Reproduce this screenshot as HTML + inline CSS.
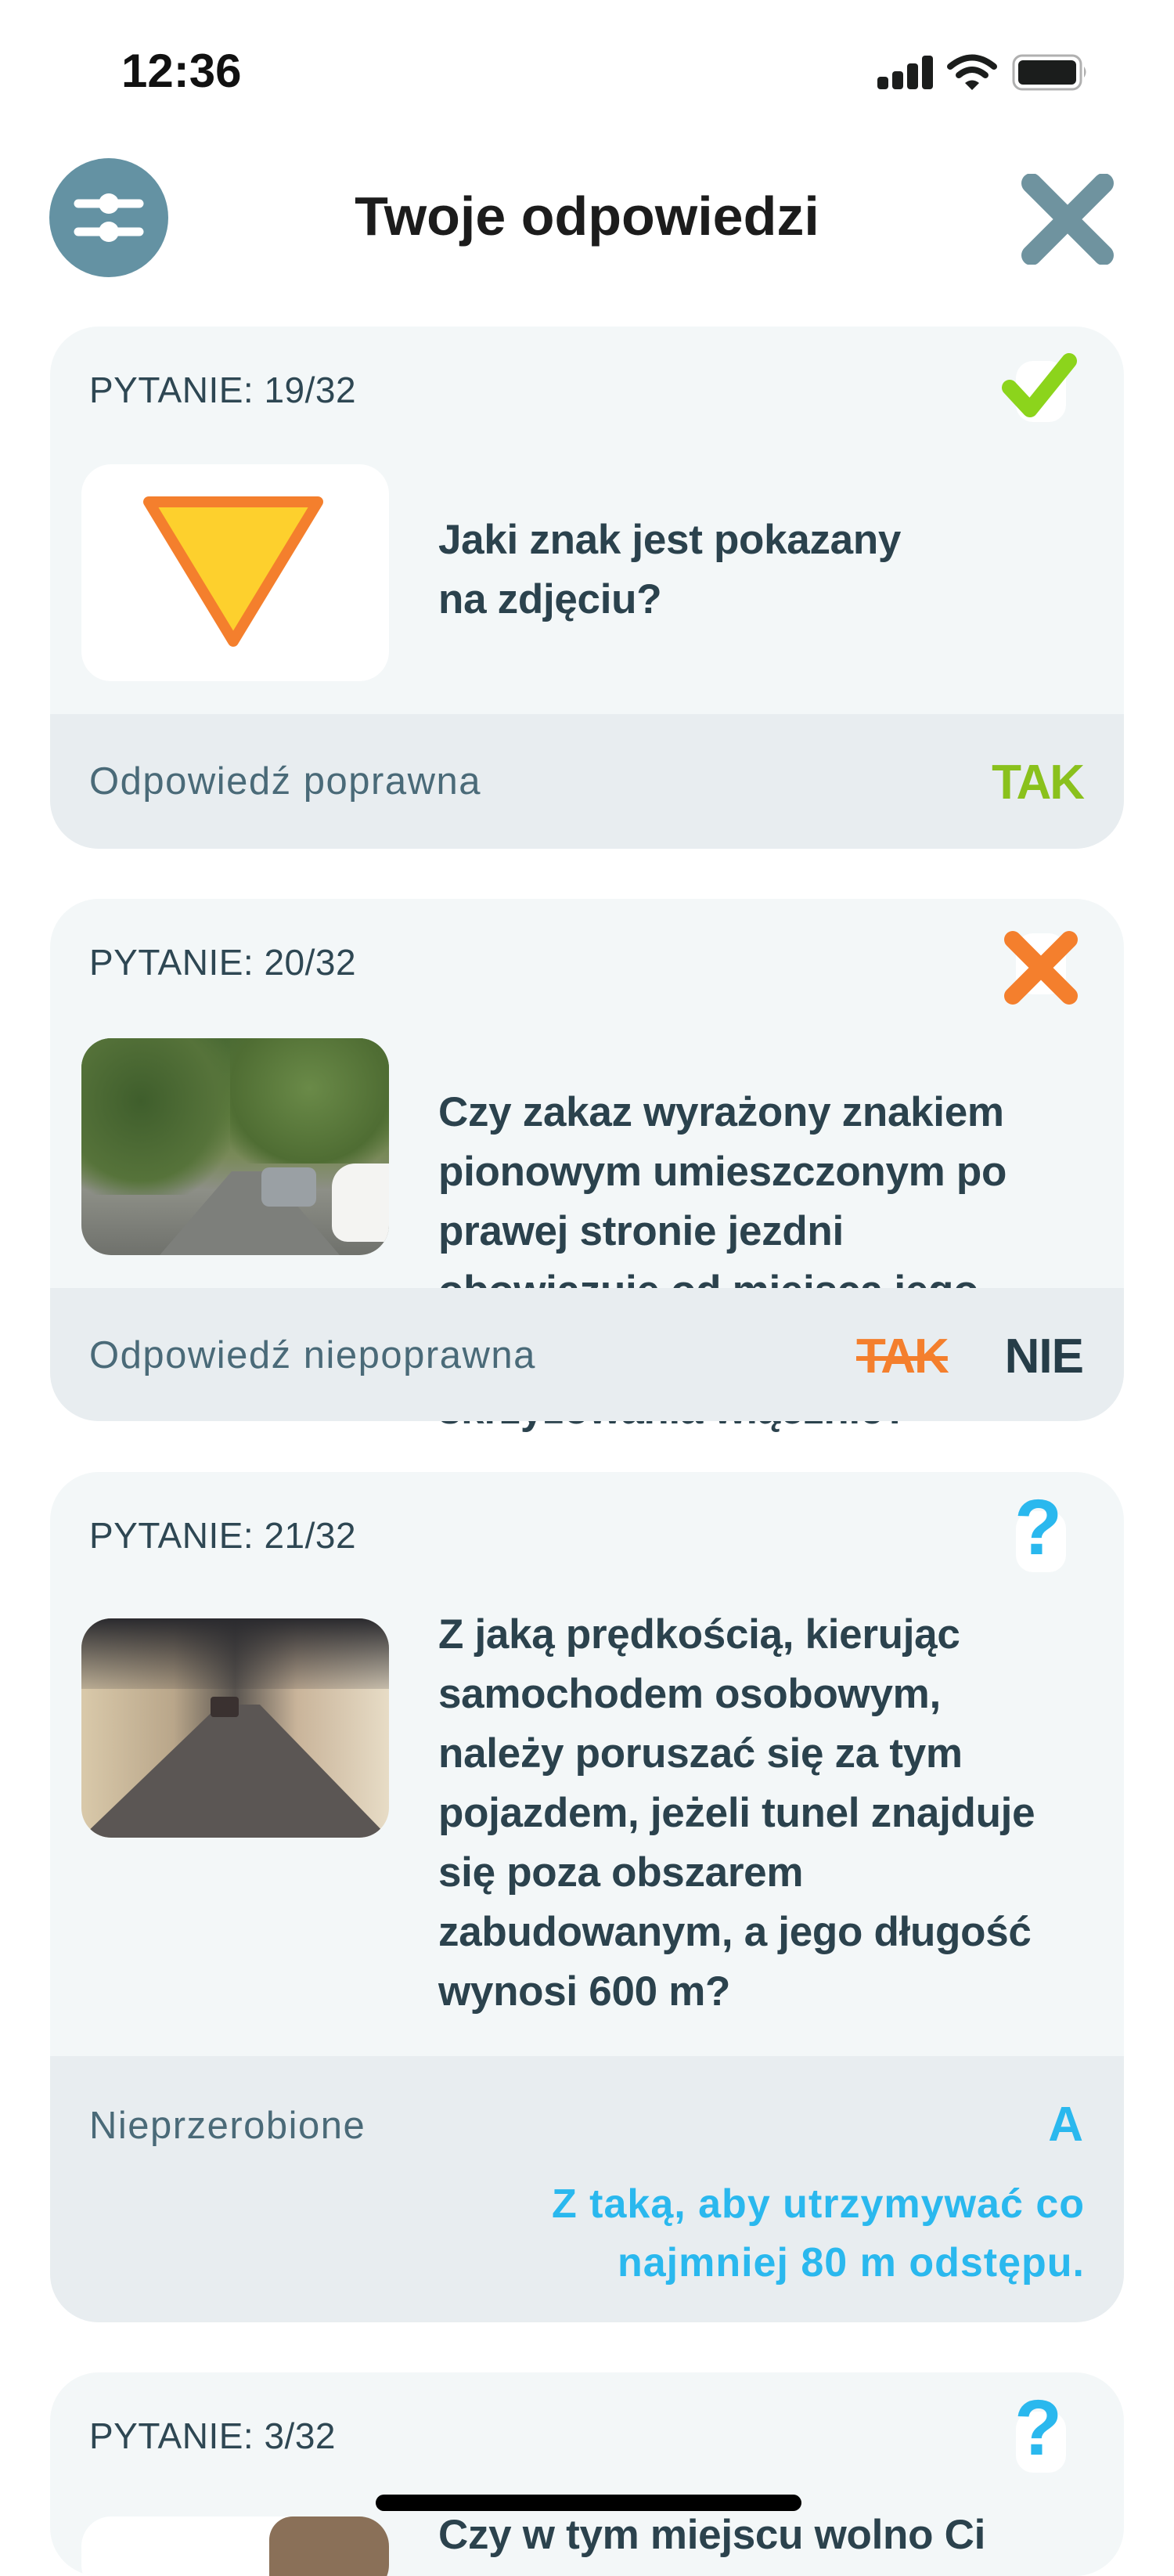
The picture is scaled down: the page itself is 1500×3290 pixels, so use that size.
<!DOCTYPE html>
<html><head><meta charset="utf-8">
<style>
*{margin:0;padding:0;box-sizing:border-box}
body{width:1500px;height:3248px;background:#fff;position:relative;overflow:hidden;font-family:"Liberation Sans",sans-serif;color:#2b424d}
.a{position:absolute}
.card{position:absolute;left:64px;width:1372px;background:#f3f7f8;border-radius:62px;overflow:hidden}
.foot{position:absolute;left:0;width:100%;background:#e8edf0;z-index:3}
.lab{position:absolute;left:50px;font-size:46px;color:#2e4753;letter-spacing:0.5px;white-space:nowrap}
.q{position:absolute;left:496px;font-size:53px;font-weight:bold;line-height:76px;color:#2b424d;white-space:nowrap;letter-spacing:-0.3px}
.ft{position:absolute;left:50px;font-size:49px;color:#4a6a78;white-space:nowrap;letter-spacing:1.5px}
.img{position:absolute;left:40px;width:393px;border-radius:38px;overflow:hidden}
.badge{position:absolute;left:1226px;width:82px;height:100px;background:#fff;border-radius:22px}
</style></head><body>
<div class="a" style="left:155px;top:56px;font-size:60px;font-weight:bold;color:#111">12:36</div>
<svg class="a" style="left:1118px;top:68px" width="270" height="50" viewBox="0 0 270 50">
<rect x="3" y="30" width="14" height="16" rx="4" fill="#1b1d1c"/>
<rect x="22" y="23" width="14" height="23" rx="4" fill="#1b1d1c"/>
<rect x="41" y="13" width="14" height="33" rx="4" fill="#1b1d1c"/>
<rect x="60" y="3" width="14" height="43" rx="4" fill="#1b1d1c"/>
<path d="M96 17 Q124 -6 152 17" stroke="#1b1d1c" stroke-width="8" fill="none" stroke-linecap="round"/>
<path d="M107 28 Q124 14 141 28" stroke="#1b1d1c" stroke-width="8" fill="none" stroke-linecap="round"/>
<path d="M115 38 L124 47 L133 38 Q124 31 115 38Z" fill="#1b1d1c"/>
<rect x="177" y="3" width="86" height="43" rx="11" fill="none" stroke="#b0b0b0" stroke-width="3"/>
<rect x="183" y="9" width="74" height="31" rx="6" fill="#1b1d1c"/>
<path d="M267 17 Q272 24 267 31Z" fill="#b0b0b0"/>
</svg>
<svg class="a" style="left:63px;top:202px" width="152" height="152" viewBox="0 0 152 152">
<circle cx="76" cy="76" r="76" fill="#6492a3"/>
<line x1="37" y1="58" x2="115" y2="58" stroke="#fff" stroke-width="11" stroke-linecap="round"/>
<line x1="37" y1="94" x2="115" y2="94" stroke="#fff" stroke-width="11" stroke-linecap="round"/>
<circle cx="76" cy="58" r="13" fill="#fff"/><circle cx="76" cy="94" r="13" fill="#fff"/>
</svg>
<div class="a" style="left:0;width:1500px;top:236px;text-align:center;font-size:70px;font-weight:bold;color:#1c1c1c">Twoje odpowiedzi</div>
<svg class="a" style="left:1304px;top:222px" width="120" height="116" viewBox="0 0 120 116">
<path d="M14 12 L106 104 M106 12 L14 104" stroke="#6f939f" stroke-width="26" stroke-linecap="round"/>
</svg>

<div class="card" style="top:417px;height:667px">
<div class="lab" style="top:54px">PYTANIE: 19/32</div>
<div class="badge" style="top:44px;height:78px;left:1234px;width:64px"></div>
<svg class="a" style="left:1214px;top:30px" width="100" height="92" viewBox="0 0 100 92"><path d="M12 48 L38 76 L88 14" stroke="#8cd41c" stroke-width="20" fill="none" stroke-linecap="round" stroke-linejoin="round"/></svg>
<div class="img" style="top:176px;height:277px;background:#fff">
<svg class="a" style="left:78px;top:40px" width="232" height="196" viewBox="0 0 232 196"><path d="M8 8 L224 8 L116 186Z" fill="#fdd02d" stroke="#f47f2d" stroke-width="14" stroke-linejoin="round"/></svg>
</div>
<div class="q" style="top:235px">Jaki znak jest pokazany<br>na zdjęciu?</div>
<div class="foot" style="top:495px;height:172px">
<div class="ft" style="top:58px">Odpowiedź poprawna</div>
<div class="a" style="right:52px;top:52px;font-size:62px;font-weight:bold;color:#8ac11c;letter-spacing:-2px">TAK</div>
</div>
</div>

<div class="card" style="top:1148px;height:667px;overflow:visible">
<div class="lab" style="top:54px">PYTANIE: 20/32</div>
<div class="badge" style="top:44px;height:78px;left:1234px;width:64px"></div>
<svg class="a" style="left:1216px;top:40px" width="100" height="96" viewBox="0 0 100 96"><path d="M14 12 L86 84 M86 12 L14 84" stroke="#f47f2d" stroke-width="22" stroke-linecap="round"/></svg>
<div class="img" style="top:178px;height:277px;background:linear-gradient(180deg,#4a6a34 0%,#5f7e3e 35%,#7a8a5a 55%,#8d8f87 70%,#6f716c 100%)">
<div class="a" style="left:0;top:0;width:190px;height:200px;background:radial-gradient(ellipse at 40% 40%,#3f5e2c,#56733a 60%,transparent 80%)"></div>
<div class="a" style="left:190px;top:0;width:203px;height:160px;background:radial-gradient(ellipse at 50% 40%,#6a8a48,#4f6d33 70%,transparent 90%)"></div>
<div class="a" style="left:100px;top:170px;width:230px;height:107px;background:#7d7f7b;clip-path:polygon(40% 0,60% 0,100% 100%,0 100%)"></div>
<div class="a" style="left:320px;top:160px;width:80px;height:100px;background:#f4f4f2;border-radius:30px 0 0 20px"></div>
<div class="a" style="left:230px;top:165px;width:70px;height:50px;background:#9aa0a4;border-radius:10px"></div>
</div>
<div class="q" style="top:235px;z-index:1">Czy zakaz wyrażony znakiem<br>pionowym umieszczonym po<br>prawej stronie jezdni<br>obowiązuje od miejsca jego<br>umieszczenia do najbliższego<br>skrzyżowania włącznie?</div>
<div class="foot" style="top:497px;height:170px;border-radius:0 0 62px 62px">
<div class="ft" style="top:58px">Odpowiedź niepoprawna</div>
<div class="a" style="left:1030px;top:52px;font-size:62px;font-weight:bold;color:#f47f2d;text-decoration:line-through;letter-spacing:-2px">TAK</div>
<div class="a" style="right:52px;top:52px;font-size:62px;font-weight:bold;color:#263d48;letter-spacing:-1px">NIE</div>
</div>
</div>
<div class="a" style="left:0;top:1830px;width:1500px;height:40px;background:#fff;z-index:2"></div>

<div class="card" style="top:1880px;height:1086px;z-index:3">
<div class="lab" style="top:54px">PYTANIE: 21/32</div>
<div class="badge" style="top:50px;height:78px;left:1234px;width:64px"></div>
<div class="a" style="left:1232px;top:14px;font-size:100px;font-weight:bold;color:#2ab8ee">?</div>
<div class="img" style="top:187px;height:280px;background:linear-gradient(90deg,#d9c9aa 0%,#b9a68a 30%,#5a5550 50%,#c9b49a 70%,#e7dcc6 100%)">
<div class="a" style="left:0;top:0;width:393px;height:90px;background:linear-gradient(180deg,#2a2a2e,rgba(60,58,60,0.2))"></div>
<div class="a" style="left:0;top:110px;width:393px;height:170px;background:#5b5654;clip-path:polygon(45% 0,58% 0,100% 100%,0 100%)"></div>
<div class="a" style="left:165px;top:100px;width:36px;height:26px;background:#3a3130;border-radius:4px"></div>
</div>
<div class="q" style="top:170px">Z jaką prędkością, kierując<br>samochodem osobowym,<br>należy poruszać się za tym<br>pojazdem, jeżeli tunel znajduje<br>się poza obszarem<br>zabudowanym, a jego długość<br>wynosi 600 m?</div>
<div class="foot" style="top:746px;height:340px">
<div class="ft" style="top:61px">Nieprzerobione</div>
<div class="a" style="right:52px;top:52px;font-size:62px;font-weight:bold;color:#2ab8ee">A</div>
<div class="a" style="right:50px;top:152px;text-align:right;font-size:52px;font-weight:bold;color:#2ab8ee;line-height:75px;letter-spacing:1px">Z taką, aby utrzymywać co<br>najmniej 80 m odstępu.</div>
</div>
</div>

<div class="card" style="top:3030px;height:260px">
<div class="lab" style="top:54px">PYTANIE: 3/32</div>
<div class="badge" style="top:50px;height:78px;left:1234px;width:64px"></div>
<div class="a" style="left:1232px;top:14px;font-size:100px;font-weight:bold;color:#2ab8ee">?</div>
<div class="img" style="top:184px;height:100px;background:#fff">
<div class="a" style="left:240px;top:0;width:153px;height:100px;background:#8a7058;border-radius:30px 0 0 0"></div>
</div>
<div class="q" style="top:170px">Czy w tym miejscu wolno Ci</div>
</div>
<div class="a" style="left:480px;top:3186px;width:544px;height:21px;border-radius:11px;background:#000;z-index:5"></div>
</body></html>
